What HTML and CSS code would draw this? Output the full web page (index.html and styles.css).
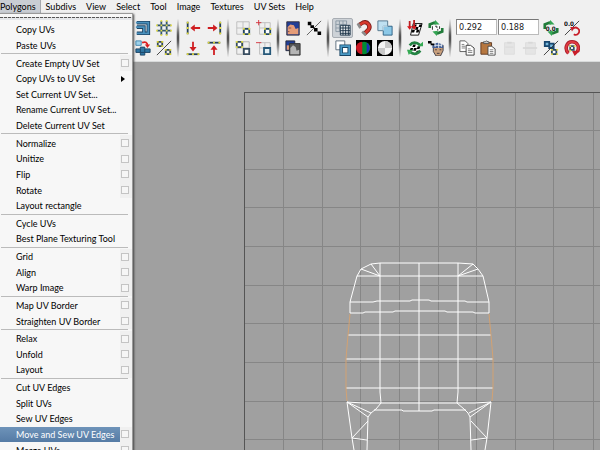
FILE: index.html
```
<!DOCTYPE html>
<html lang="en">
<head>
  <meta charset="utf-8">
  <title>UV Texture Editor</title>
  <link rel="stylesheet" href="styles.css">
</head>
<body>
  <nav class="menubar">
    <button class="open">Polygons</button>
    <button>Subdivs</button>
    <button>View</button>
    <button>Select</button>
    <button>Tool</button>
    <button>Image</button>
    <button>Textures</button>
    <button>UV Sets</button>
    <button>Help</button>
  </nav>

  <div class="toolbar">
    <div class="group">
      <button aria-label="Layout UVs"><svg viewBox="0 0 18 18"><path d="M2 3h13v9M2 8h8v7H2M9 15h6v-3" fill="none" stroke="#1c4566" stroke-width="4"/><path d="M1 3h14v9M1 8h9v7H2M9 15h6v-3" fill="none" stroke="#4a91bd" stroke-width="2"/></svg></button>
      <button aria-label="Grid UVs"><svg viewBox="0 0 18 18"><path d="M6 1v16M12 1v16M1 6h16M1 12h16" stroke="#33566f" stroke-width="2"/><path d="M5 5h2v2H5zM11 5h2v2h-2zM5 11h2v2H5zM11 11h2v2h-2zM5 0h2v2H5zM11 0h2v2h-2zM5 16h2v2H5zM11 16h2v2h-2zM0 5h2v2H0zM16 5h2v2h-2zM0 11h2v2H0zM16 11h2v2h-2z" fill="#e6e052"/></svg></button>
      <button aria-label="Move and sew"><svg viewBox="0 0 18 18"><path d="M1 10h5V8h5v2h6v4h-6v3H6v-3H1z" fill="#2f76a3" stroke="#183f60"/><path d="M6 10v4M11 10v4M6 14h5" stroke="#183f60"/><path d="M1 1h6v5H1z" fill="#9ed2ea" stroke="#3d83ad"/><path d="M8 3q6-2 6 3" fill="none" stroke="#d91d20" stroke-width="2"/><path d="M11 5h6l-3 4z" fill="#d91d20"/></svg></button>
      <button aria-label="Separate UVs"><svg viewBox="0 0 18 18"><path d="M1 17L17 1" stroke="#333"/><path d="M2 2h5v5H2zM11 11h5v5h-5z" fill="none" stroke="#33485c" stroke-width="2"/><path d="M1 1h2v2H1zM6 1h2v2H6zM1 6h2v2H1zM6 6h2v2H6zM10 10h2v2h-2zM15 10h2v2h-2zM10 15h2v2h-2zM15 15h2v2h-2z" fill="#ded72f"/></svg></button>
    </div>
    <span class="divider"></span>
    <div class="group">
      <button aria-label="Align left"><svg viewBox="0 0 18 18"><path d="M3 2v14" stroke="#253f56" stroke-width="2"/><path d="M2 2h2v2H2zM2 8h2v2H2zM2 14h2v2H2z" fill="#e4dc35"/><path d="M6 9l5-4v3h6v2h-6v3z" fill="#cf1d20"/></svg></button>
      <button aria-label="Align right"><svg viewBox="0 0 18 18"><path d="M16 2v14" stroke="#253f56" stroke-width="2"/><path d="M15 2h2v2h-2zM15 8h2v2h-2zM15 14h2v2h-2z" fill="#e4dc35"/><path d="M13 9L8 5v3H2v2h6v3z" fill="#cf1d20"/></svg></button>
      <button aria-label="Align bottom"><svg viewBox="0 0 18 18"><path d="M2 16h14" stroke="#253f56" stroke-width="2"/><path d="M2 15h2v2H2zM8 15h2v2H8zM14 15h2v2h-2z" fill="#e4dc35"/><path d="M9 13L5 8h3V2h2v6h3z" fill="#cf1d20"/></svg></button>
      <button aria-label="Align top"><svg viewBox="0 0 18 18"><path d="M2 3h14" stroke="#253f56" stroke-width="2"/><path d="M2 2h2v2H2zM8 2h2v2H8zM14 2h2v2h-2z" fill="#e4dc35"/><path d="M9 6l-4 5h3v6h2v-6h3z" fill="#cf1d20"/></svg></button>
    </div>
    <span class="divider"></span>
    <div class="group">
      <button aria-label="Isolate select"><svg viewBox="0 0 18 18"><path d="M2 2h14v14H2zM9 2v14M2 9h14" fill="none" stroke="#bbb"/><path d="M10 10h6v6h-6z" fill="#fff" stroke="#234764" stroke-width="2"/><path d="M9 9h2v2H9zM15 9h2v2h-2zM9 15h2v2H9zM15 15h2v2h-2z" fill="#e9e448"/></svg></button>
      <button aria-label="Isolate add"><svg viewBox="0 0 18 18"><path d="M4 3h12v13H4zM10 3v13M4 9h12" fill="none" stroke="#bbb"/><path d="M10 10h6v6h-6z" fill="#fff" stroke="#234764" stroke-width="2"/><path d="M9 9h2v2H9zM15 9h2v2h-2zM9 15h2v2H9zM15 15h2v2h-2z" fill="#e9e448"/><path d="M0 3h6M3 0v6" stroke="#d42b36"/></svg></button>
      <button aria-label="Isolate all"><svg viewBox="0 0 18 18"><path d="M2 2h14v14H2zM9 2v14M2 9h14" fill="none" stroke="#aaa"/><path d="M2 2h6v6H2zM10 10h6v6h-6z" fill="#fff" stroke="#384d60" stroke-width="2"/><path d="M1 1h2v2H1zM7 1h2v2H7zM1 7h2v2H1zM7 7h2v2H7z" fill="#e9e448"/></svg></button>
      <button aria-label="Isolate remove"><svg viewBox="0 0 18 18"><path d="M4 3h12v13H4zM10 3v13M4 9h12" fill="none" stroke="#bbb"/><path d="M9 9h7v7H9z" fill="#e4f0f5" stroke="#255778" stroke-width="2"/><path d="M0 3h6" stroke="#d42b36"/></svg></button>
    </div>
    <span class="divider"></span>
    <div class="group">
      <button aria-label="Display image"><svg viewBox="0 0 18 18"><path d="M2 2h14v15H2z" fill="#223e96" stroke="#332d38"/><path d="M3 8l3-3 4 1 2 4 3-1v7H3z" fill="#e59c78"/><path d="M4 9h3M3 13h2" stroke="#804d43"/></svg></button>
      <button aria-label="Toggle filtering"><svg viewBox="0 0 18 18"><path d="M1 17L17 1" stroke="#555"/><path d="M2 2h4v4H2zM5 6h4v3H5zM9 9h4v4H9zM13 13h4v4h-4z" fill="#000"/></svg></button>
      <button aria-label="Dim image"><svg viewBox="0 0 18 18"><path d="M1 1h10v11H1z" fill="#223e96" stroke="#252736"/><path d="M2 6h4v5H2z" fill="#e59c78"/><path d="M5 4h12v13H5z" fill="#555" stroke="#333"/><path d="M6 9l3-3 3 2 1 4 3-1v5H6z" fill="#b4b4b4"/></svg></button>
    </div>
    <span class="divider"></span>
    <div class="group three">
      <button class="pressed" aria-label="View grid"><svg viewBox="0 0 18 18"><path d="M1 1h12v12H1zM5 1v12M9 1v12M1 5h12M1 9h12" fill="none" stroke="#8796a2"/><path d="M6 6h11v11H6z" fill="#e7ebee" stroke="#162d42"/><path d="M9 6v11M12 6v11M15 6v11M6 9h11M6 12h11M6 15h11" stroke="#162d42"/></svg></button>
      <button aria-label="Pixel snap"><svg viewBox="0 0 18 18"><path d="M3 6L8 3c5-2 9 4 6 8l-5 5" fill="none" stroke="#7b1d1b" stroke-width="5"/><path d="M3 6L8 3c5-2 9 4 6 8l-5 5" fill="none" stroke="#d7392e" stroke-width="3"/><path d="M6 8l3-2q2 0 2 2l-4 4" fill="none" stroke="#efefef" stroke-width="2"/><path d="M2 4l3 5M7 13l4 4" stroke="#8c8c8c" stroke-width="3"/></svg></button>
      <button aria-label="Shade UVs"><svg viewBox="0 0 18 18"><path d="M1 1h11v11H1z" fill="#bfe0f1" stroke="#4d718a"/><path d="M7 7h10v10H7z" fill="#8cc8e7" stroke="#285b80"/><path d="M7 12V7h5" fill="none" stroke="#e8f7ff"/></svg></button>
      <button aria-label="Toggle borders"><svg viewBox="0 0 18 18"><path d="M1 1h10v10H1z" fill="#fff" stroke="#536577"/><path d="M7 7h9v9H7z" fill="#fff" stroke="#174565" stroke-width="4"/><path d="M7 7h9v9H7z" fill="none" stroke="#4b9ac5" stroke-width="2"/></svg></button>
      <button aria-label="Display RGB"><svg viewBox="0 0 18 18"><path d="M0 0h18v18H0z" fill="#000"/><circle cx="9" cy="9" r="7" fill="#008f32"/><path d="M7 2a7 7 0 0 0 0 14z" fill="#c81624"/><path d="M12 3a7 7 0 0 1 0 12z" fill="#202cbc"/></svg></button>
      <button aria-label="Display alpha"><svg viewBox="0 0 18 18"><path d="M0 0h18v18H0z" fill="#000"/><circle cx="9" cy="9" r="8" fill="#f5f5f5"/><path d="M9 1a8 8 0 0 1 8 8H9zM9 9v8a8 8 0 0 1-8-8z" fill="#c9c9c9"/></svg></button>
    </div>
    <span class="divider"></span>
    <div class="group">
      <button aria-label="Bake texture"><svg viewBox="0 0 18 18"><path d="M7 4h10l-4 13H4z" fill="#fff" stroke="#000"/><path d="M8 5h3l-1 3H7zM14 5h3l-1 3h-3zM10 8h3l-1 3H9zM6 11h3l-1 3H5zM11 11h3l-1 3h-3z"/><path d="M3 1v8M8 0v8" stroke="#bc1e20" stroke-width="2"/><path d="M0 7h6l-3 4zM5 7h6l-3 4z" fill="#d7191d"/></svg></button>
      <button aria-label="Update PSD"><svg viewBox="0 0 18 18"><path d="M2 9V5l5-2 2 1M16 9v4l-5 2-2-1" fill="none" stroke="#217b3a" stroke-width="3"/><path d="M8 0l5 5H7zM10 18l-5-5 6-1z" fill="#34a553"/><path d="M4 6h10v6H4z" fill="#fff"/><path d="M5 7v4M8 7h2v2M11 10v2M13 7v3" fill="none" stroke="#222"/></svg></button>
      <button aria-label="Refresh bake"><svg viewBox="0 0 18 18"><path d="M5 4h11l-3 11H2z" fill="#fff"/><path d="M7 5h3L9 8H6zM12 7h3l-1 3h-3zM8 9h3l-1 3H7zM4 9h3l-1 3H3zM11 12h2v2h-3z"/><path d="M3 6q5-6 12 0M15 12q-5 6-11 2" fill="none" stroke="#238343" stroke-width="3"/><path d="M12 7h6V2zM0 11h7l-5 6z" fill="#36aa54"/></svg></button>
      <button aria-label="Use image ratio"><svg viewBox="0 0 18 18"><path d="M6 6h11v6l-3 6H9l-3-5z" fill="#c9a07d" stroke="#363743"/><path d="M5 6q5-6 12 0v3H5z" fill="#425d94"/><path d="M8 3v5M12 3v6M15 4v4M7 6h9" stroke="#e5e9ef"/><path d="M8 11h2M13 11h2M10 15h3" stroke="#373038"/><path d="M0 1h4v3H0zM3 4h4v2H3z"/></svg></button>
    </div>
    <span class="divider"></span>
    <div class="group coords">
      <input type="text" value="0.292" aria-label="U value">
      <input type="text" value="0.188" aria-label="V value">
      <button aria-label="Refresh UV values"><svg viewBox="0 0 18 18"><path d="M2 10V5l5-2 2 1M16 9v4l-5 2-2-1" fill="none" stroke="#217b3a" stroke-width="3"/><path d="M8 0l5 5H7zM10 18l-5-5 6-1z" fill="#34a553"/><text x="3" y="12">0.0</text></svg></button>
      <button aria-label="Reset UV values"><svg viewBox="0 0 18 18"><path d="M1 17L17 1" stroke="#333"/><text x="0" y="7">0.0</text><path d="M11 16a4 4 0 1 0-1-6" fill="none" stroke="#c71e29" stroke-width="2"/><path d="M7 8h5l-3 5z" fill="#c71e29"/></svg></button>
      <button aria-label="Copy"><svg viewBox="0 0 18 18"><path d="M1 1h6l3 3v9H1z" fill="#fff" stroke="#555"/><path d="M3 5h3M3 7h4M3 9h4" stroke="#777"/><path d="M8 6h5l4 3v8H8z" fill="#fff" stroke="#333"/><path d="M10 10h3M10 12h5M10 14h5" stroke="#777"/></svg></button>
      <button aria-label="Paste"><svg viewBox="0 0 18 18"><path d="M1 3h12v13H1z" fill="#b67740" stroke="#5c351d"/><path d="M4 4V2h2l1-1 2 1h1v2z" fill="#ccc" stroke="#555"/><path d="M9 7h4l4 3v7H9z" fill="#fff" stroke="#444"/><path d="M11 11h4M11 13h4M11 15h4" stroke="#777"/></svg></button>
      <button aria-label="Paste U" disabled><svg viewBox="0 0 18 18"><path d="M4 3h11v13H4z" fill="#e5e5e5" stroke="#ddd"/><path d="M7 4V2h5v2z" fill="#d8d8d8"/><path d="M5 8h9" stroke="#d8d8d8"/></svg></button>
      <button aria-label="Paste V" disabled><svg viewBox="0 0 18 18"><path d="M4 3h11v13H4z" fill="#e5e5e5" stroke="#ddd"/><path d="M7 4V2h5v2z" fill="#d8d8d8"/><path d="M1 9h16" stroke="#d8d8d8" stroke-width="2"/></svg></button>
      <button aria-label="Copy and paste mode"><svg viewBox="0 0 18 18"><path d="M2 2h5v5H2zM7 4h5v5H7z" fill="#76b8dc" stroke="#17466f" stroke-width="2"/><path d="M1 17L17 1" stroke="#333"/><path d="M10 11h5v5h-5z" fill="#fff" stroke="#294966" stroke-width="2"/><path d="M9 10h2v2H9zM15 10h2v2h-2zM9 15h2v2H9zM15 15h2v2h-2z" fill="#e1d847"/></svg></button>
      <button aria-label="Cycle UVs"><svg viewBox="0 0 18 18"><path d="M5 15C0 10 3 2 9 2s9 6 6 11" fill="none" stroke="#a9202b" stroke-width="4"/><path d="M5 15C0 10 3 2 9 2s9 6 6 11" fill="none" stroke="#e13a42" stroke-width="2"/><path d="M9 12h9l-6 6z" fill="#c91e29"/><path d="M7 7h4v4H7z" fill="#fff" stroke="#345169" stroke-width="2"/><path d="M6 6h2v2H6zM11 6h2v2h-2zM6 11h2v2H6z" fill="#e1d847"/></svg></button>
    </div>
  </div>

  <main class="view">
    <svg viewBox="0 62 600 388" preserveAspectRatio="xMinYMin slice">
      <g class="grid">
        <path d="M283 93V450M322 93V450M360 93V450M399 93V450M438 93V450M476 93V450M515 93V450M553 93V450M593 93V450"/>
        <path d="M245 130H600M245 169H600M245 207H600M245 246H600M245 285H600M245 323H600M245 362H600M245 401H600M245 439H600"/>
      </g>
      <path class="frame" d="M244 450V92H600"/>
      <g class="mesh">
        <!-- outline -->
        <path d="M350 313V302L357 276 361 269 371 264 380 263H458L473 264 478 269 483 276 489 302V313"/>
        <!-- corner fans -->
        <path d="M371 264L380 276 361 269M473 264L458 276 478 269"/>
        <!-- columns -->
        <path d="M380 263V392L381 403 376 409 371 413 368 417 367 450M458 263V392L457 403 464 409 468 413 470 417 471 450M419 263V411"/>
        <!-- rows -->
        <path d="M357 276H483M350 302H373L377 301H410L412 300H429L431 301H465L467 302H489"/>
        <path d="M350 313H363L365 312H393L395 311H445L447 312H473L475 313H489"/>
        <path d="M348 335H491M346 359H493M346 388H493M347 402L363 403H475L491 402M374 410H402L403 411H432L434 410H466"/>
        <!-- legs -->
        <path d="M371 413L347 402 368 417M347 402L352 438 354 450M368 421L352 438 367 440"/>
        <path d="M469 413L491 402 470 417M491 402L487 438 485 450M471 421L487 438 471 440"/>
      </g>
      <path class="seam" d="M350 314L348 335 346 359V388L347 401M489 314L491 335 493 359V388L492 401"/>
    </svg>
  </main>

  <div class="menu">
    <div class="tear"></div>
    <div class="row"><button>Copy UVs</button></div>
    <div class="row"><button>Paste UVs</button></div>
    <hr>
    <div class="row"><button>Create Empty UV Set</button><button class="option" aria-label="Options"></button></div>
    <div class="row sub"><button>Copy UVs to UV Set</button></div>
    <div class="row"><button>Set Current UV Set...</button></div>
    <div class="row"><button>Rename Current UV Set...</button></div>
    <div class="row"><button>Delete Current UV Set</button></div>
    <hr>
    <div class="row"><button>Normalize</button><button class="option" aria-label="Options"></button></div>
    <div class="row"><button>Unitize</button><button class="option" aria-label="Options"></button></div>
    <div class="row"><button>Flip</button><button class="option" aria-label="Options"></button></div>
    <div class="row"><button>Rotate</button><button class="option" aria-label="Options"></button></div>
    <div class="row"><button>Layout rectangle</button></div>
    <hr>
    <div class="row"><button>Cycle UVs</button></div>
    <div class="row"><button>Best Plane Texturing Tool</button></div>
    <hr>
    <div class="row"><button>Grid</button><button class="option" aria-label="Options"></button></div>
    <div class="row"><button>Align</button><button class="option" aria-label="Options"></button></div>
    <div class="row"><button>Warp Image</button><button class="option" aria-label="Options"></button></div>
    <hr>
    <div class="row"><button>Map UV Border</button><button class="option" aria-label="Options"></button></div>
    <div class="row"><button>Straighten UV Border</button><button class="option" aria-label="Options"></button></div>
    <hr>
    <div class="row"><button>Relax</button><button class="option" aria-label="Options"></button></div>
    <div class="row"><button>Unfold</button><button class="option" aria-label="Options"></button></div>
    <div class="row"><button>Layout</button><button class="option" aria-label="Options"></button></div>
    <hr>
    <div class="row"><button>Cut UV Edges</button></div>
    <div class="row"><button>Split UVs</button></div>
    <div class="row"><button>Sew UV Edges</button></div>
    <div class="row active"><button>Move and Sew UV Edges</button><button class="option" aria-label="Options"></button></div>
    <div class="row"><button>Merge UVs</button><button class="option" aria-label="Options"></button></div>
  </div>
</body>
</html>
```
FILE: styles.css
```
* { box-sizing: border-box; }
body { margin: 0; height: 100vh; display: flex; flex-direction: column; position: relative; overflow: hidden; background: #a0a0a0; color: #000; font: 9px Lato, "Liberation Sans", sans-serif; }
button { margin: 0; padding: 0; border: 0; background: none; color: inherit; font: inherit; white-space: nowrap; }

.menubar { display: flex; height: 14px; background: #f0f0f0; }
.menubar button { padding: 0 5px 1px; line-height: 12px; }
.menubar .open { padding: 0 4px 1px 0; background: #c9cdd3; border-right: 1px solid #a5a9ae; }

.toolbar { display: flex; align-items: flex-start; height: 48px; padding: 4px 0 0 132px; background: #f0f0f0; border-bottom: 1px solid #d8dada; }
.group { display: grid; grid-template-columns: repeat(2, 21px); grid-auto-rows: 20px; flex: none; }
.group.three { grid-template-columns: repeat(3, 21px); margin-right: 1px; }
.group.coords { grid-template-columns: repeat(6, 21px); margin-left: 2px; }
.group button { display: flex; align-items: center; justify-content: center; }
.group svg { width: 16px; height: 16px; flex: none; }
.group text { font: bold 7px "DejaVu Sans Condensed", sans-serif; fill: #111; }
.group .pressed { background: #cdd2d7; border: 1px solid #a8adb3; border-radius: 2px; }
.divider { flex: none; width: 8px; height: 40px; background: radial-gradient(ellipse 2px 20px at center, #444 20%, #aaa 60%, transparent); }
.coords input { grid-column: span 2; width: 41px; height: 16px; margin-top: 1px; padding: 0 2px; border: 1px solid #888; border-color: #777 #bbb #bbb #888; background: #fff; color: #222; font: 9px "DejaVu Sans Condensed", sans-serif; }

.view { flex: 1; min-height: 0; }
.view svg { display: block; width: 100%; height: 100%; }
.view path { fill: none; }
.grid path { stroke: #868686; shape-rendering: crispEdges; }
.view .frame { stroke: #555; shape-rendering: crispEdges; }
.view .mesh path { stroke: #fff; }
.view .seam { stroke: #d2a273; }

/* the open menu runs past the bottom of the window */
.menu { position: absolute; top: 13px; bottom: -8px; left: 0; width: 133px; display: flex; flex-direction: column; background: #f7f7f7; border-top: 1px solid #999; border-right: 1px solid #999; box-shadow: 1px 1px 2px #444; }
.tear { height: 8px; flex: none; background: linear-gradient(#f7f7f7 3px, transparent 3px 4px, #e5e7ea 4px 6px, #f7f7f7 6px), repeating-linear-gradient(90deg, #555 0 3px, #ddd 3px 4px); }
.row { flex: 1; display: flex; min-height: 0; position: relative; }
.row button { flex: 1; padding-left: 16px; text-align: left; }
.row .option { flex: none; width: 12px; padding: 0 0 0 1px; background: #f0f0f0; }
.option::before { content: ""; display: block; width: 6px; height: 6px; border: 1px solid #c4c4c4; background: #f6f6f6; }
.sub::after { content: ""; align-self: center; margin-right: 7px; border: 3px solid transparent; border-left: 4px solid #000; border-right: 0; }
.active button:first-child { background: linear-gradient(#6e93b9, #557ba5); color: #fff; }
.menu hr { flex: none; width: 127px; height: 1px; margin: 0 0 1px 1px; border: 0; background: #bbb; }
```
